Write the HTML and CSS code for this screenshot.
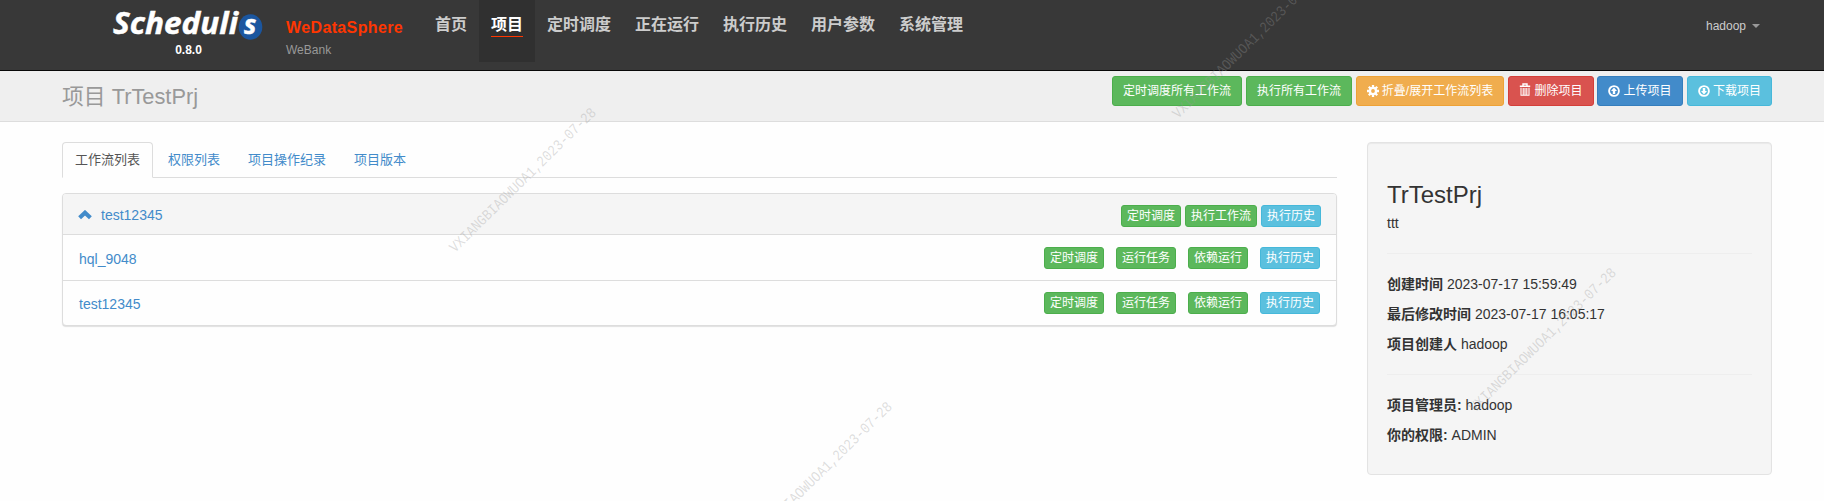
FILE: index.html
```html
<!DOCTYPE html>
<html lang="zh-CN">
<head>
<meta charset="utf-8">
<title>Schedulis</title>
<link rel="stylesheet" href="styles.css">
</head>
<body>
<header class="navbar">
  <div class="logo">
    <svg class="logo-mark" width="152" height="44" viewBox="0 0 152 44">
      <text class="logo-text" x="1" y="34" textLength="125" lengthAdjust="spacingAndGlyphs">Scheduli</text>
      <ellipse cx="138.5" cy="27" rx="11.8" ry="12.8" fill="#1b569f"/>
      <text class="logo-s" x="132" y="34">s</text>
    </svg>
    <div class="version">0.8.0</div>
  </div>
  <div class="brand"><div class="brand-name">WeDataSphere</div><div class="brand-sub">WeBank</div></div>
  <nav class="menu">
    <a>首页</a><a class="active"><span>项目</span></a><a>定时调度</a><a>正在运行</a><a>执行历史</a><a>用户参数</a><a>系统管理</a>
  </nav>
  <div class="user">hadoop<i class="caret"></i></div>
</header>
<section class="titlebar">
  <h1>项目 TrTestPrj</h1>
  <div class="actions">
    <button class="btn green w130">定时调度所有工作流</button>
    <button class="btn green w106">执行所有工作流</button>
    <button class="btn orange w148"><svg class="icon" viewBox="0 0 12 12"><circle cx="6" cy="6" r="3.1" fill="none" stroke="#fff" stroke-width="2.4"/><path d="M6 0v2.5M6 9.5V12M0 6h2.5M9.5 6H12M1.8 1.8l1.7 1.7M8.5 8.5l1.7 1.7M10.2 1.8L8.500 3.500M3.500 8.500L1.800 10.200" stroke="#fff" stroke-width="2.3"/></svg>折叠/展开工作流列表</button>
    <button class="btn red w86"><svg class="icon trash" viewBox="0 0 12 14"><path d="M4 2.500V1h4v1.500M.8 3.200h10.400" fill="none" stroke="#fff" stroke-width="1.400"/><path d="M2 4.800V12.300h8V4.800M4.200 5v7M6 5v7M7.800 5v7" fill="none" stroke="#fff" stroke-width="1.1"/></svg>删除项目</button>
    <button class="btn blue w86 tight"><svg class="icon" viewBox="0 0 12 12"><circle cx="6" cy="6" r="4.900" fill="none" stroke="#fff" stroke-width="1.900"/><path d="M6 2.600l3 3.300H7.200V9H4.800V5.900H3z" fill="#fff"/></svg>上传项目</button>
    <button class="btn cyan w85"><svg class="icon" viewBox="0 0 12 12"><circle cx="6" cy="6" r="4.900" fill="none" stroke="#fff" stroke-width="1.900"/><path d="M6 9.400l3-3.300H7.200V3H4.800v3.100H3z" fill="#fff"/></svg>下载项目</button>
  </div>
</section>
<main class="content">
  <div class="main">
    <div class="tabs"><a class="tab current">工作流列表</a><a class="tab">权限列表</a><a class="tab">项目操作纪录</a><a class="tab">项目版本</a></div>
    <div class="panel">
      <div class="panel-head">
        <a class="flow"><svg class="chevron" width="14" height="10" viewBox="0 0 14 10"><path d="M1.600 7.800L7 2.700l5.400 5.100" fill="none" stroke="#428bca" stroke-width="4.100"/></svg>test12345</a>
        <div class="head-buttons"><button class="btn xs green">定时调度</button><button class="btn xs green wide">执行工作流</button><button class="btn xs cyan">执行历史</button></div>
      </div>
      <div class="row first"><a>hql_9048</a>
        <div class="row-buttons"><button class="btn xs green">定时调度</button><button class="btn xs green">运行任务</button><button class="btn xs green">依赖运行</button><button class="btn xs cyan">执行历史</button></div>
      </div>
      <div class="row"><a>test12345</a>
        <div class="row-buttons"><button class="btn xs green">定时调度</button><button class="btn xs green">运行任务</button><button class="btn xs green">依赖运行</button><button class="btn xs cyan">执行历史</button></div>
      </div>
    </div>
  </div>
  <aside class="well">
    <h2>TrTestPrj</h2>
    <p class="desc">ttt</p>
    <hr>
    <p><b>创建时间</b> 2023-07-17 15:59:49</p>
    <p><b>最后修改时间</b> 2023-07-17 16:05:17</p>
    <p><b>项目创建人</b> hadoop</p>
    <hr>
    <p><b>项目管理员:</b> hadoop</p>
    <p><b>你的权限:</b> ADMIN</p>
  </aside>
</main>
<svg class="watermark" id="watermark" width="1824" height="501"></svg>
<script src="watermark.js"></script>
</body>
</html>
```
FILE: styles.css
```css
* { box-sizing: border-box; }
body { margin: 0; height: 501px; overflow: hidden; position: relative; background: #fefefe; color: #333; font: 14px/20px "Liberation Sans", "Noto Sans CJK SC", sans-serif; }
a { color: #428bca; text-decoration: none; }
h1, h2, p { margin: 0; font-weight: normal; }
.navbar { display: flex; height: 71px; padding-left: 112px; background: #383838; border-bottom: 1px solid #080808; }
.logo { width: 174px; }
.logo-mark { display: block; }
.logo-text, .logo-s { fill: #fff; stroke: #fff; stroke-width: .5; font-family: "Open Sans", sans-serif; font-weight: 700; font-style: italic; }
.logo-text { font-size: 31px; }
.logo-s { font-size: 26px; }
.version { width: 152px; margin-top: -4px; text-align: center; color: #fff; font-size: 12px; font-weight: bold; text-indent: 1px; }
.brand { width: 137px; padding-top: 18px; }
.brand-name { color: #ff3601; font-size: 16px; font-weight: bold; line-height: 20px; letter-spacing: .37px; }
.brand-sub { margin-top: 2px; color: #999; font-size: 12px; }
.menu { display: flex; height: 62px; }
.menu a { padding: 15px 12px; color: #ccc; font-size: 16px; font-weight: bold; }
.menu .active { background: #303030; color: #fff; }
.active span { display: block; height: 22px; border-bottom: 1px solid #ff3601; }
.user { display: flex; align-items: center; height: 20px; margin: 16px 64px 0 auto; color: #ccc; font-size: 12px; }
.caret { margin-left: 6px; border: 4px solid transparent; border-top-color: #999; border-bottom: 0; }
.titlebar { display: flex; justify-content: space-between; height: 51px; padding: 5px 52px 0 62px; background: #efefef; border-bottom: 1px solid #ddd; }
h1 { padding-top: 5px; color: #999; font-size: 21.8px; line-height: 32px; }
.actions { display: flex; gap: 4px; }
.btn { display: flex; align-items: center; justify-content: center; flex: none; height: 30px; padding: 0; border: 1px solid; border-radius: 3px; color: #fff; font: 12px/18px "Liberation Sans", "Noto Sans CJK SC", sans-serif; white-space: nowrap; }
.green { background: #5cb85c; border-color: #4cae4c; }
.orange { background: #f0ad4e; border-color: #eea236; }
.red { background: #d9534f; border-color: #d43f3a; }
.blue { background: #428bca; border-color: #357ebd; }
.cyan { background: #5bc0de; border-color: #46b8da; }
.w130 { width: 130px; }
.w106 { width: 106px; }
.w148 { width: 148px; }
.w86 { width: 86px; }
.w85 { width: 85px; }
.tight { margin-left: -1px; }
.icon { width: 12px; height: 12px; margin: -1px 3px 0 0; }
.trash { height: 14px; margin-top: -3px; }
.content { display: flex; gap: 30px; padding: 20px 52px 0 62px; }
.main { width: 1275px; }
.tabs { display: flex; height: 36px; border-bottom: 1px solid #ddd; }
.tab { height: 36px; padding: 7px 12px; margin-right: 2px; border: 1px solid transparent; font-size: 13px; }
.tab.current { width: 91px; color: #555; background: #fefefe; border-color: #ddd #ddd #fefefe; border-radius: 4px 4px 0 0; }
.panel { margin-top: 15px; height: 133px; border: 1px solid #ddd; border-radius: 4px; background: #fefefe; box-shadow: 0 1px 1px rgba(0,0,0,.12); }
.panel-head { display: flex; justify-content: space-between; height: 41px; padding: 11px 15px 0; border-bottom: 1px solid #ddd; border-radius: 3px 3px 0 0; background: #f5f5f5; }
.flow { display: flex; height: 19px; align-items: center; }
.chevron { margin-right: 9px; }
.head-buttons { display: flex; gap: 4px; }
.row { display: flex; justify-content: space-between; height: 45px; padding: 11px 16px 0; line-height: 24px; border-bottom: 1px solid #ddd; }
.row.first { height: 46px; padding-top: 12px; }
.row-buttons { display: flex; gap: 12px; }
.btn.xs { width: 60px; height: 22px; }
.btn.wide { width: 72px; }
.well { width: 405px; height: 333px; padding: 39px 19px 0; border: 1px solid #e3e3e3; border-radius: 4px; background: #f5f5f5; box-shadow: inset 0 1px 1px rgba(0,0,0,.05); }
h2 { font-size: 24px; line-height: 26px; }
.well p { height: 20px; margin-bottom: 10px; }
.well .desc { margin-top: 5px; margin-bottom: 0; }
.well hr { height: 1px; margin: 20px 0; border: 0; background: #eee; }
.watermark { position: absolute; left: 0; top: 0; pointer-events: none; }
.watermark text { font-family: "Liberation Mono", monospace; }
.mark { fill: #999; fill-opacity: .32; font-size: 15px; }
.mark-faint { fill: #888; fill-opacity: .022; font-size: 20px; }
```
FILE: watermark.js
```js
const layer = document.getElementById('watermark');
const label = 'VXIANGBIAOWUOA1,2023-07-28';

function stamp(x, y, className, length) {
  const node = document.createElementNS('http://www.w3.org/2000/svg', 'text');
  node.setAttribute('class', className);
  node.setAttribute('transform', `translate(${x} ${y}) rotate(-44.5)`);
  node.setAttribute('textLength', length);
  node.setAttribute('lengthAdjust', 'spacingAndGlyphs');
  node.textContent = label;
  layer.appendChild(node);
}

[[455, 253], [1178, 119], [1475, 413], [751, 547]].forEach(([x, y]) => stamp(x, y, 'mark', 199));

for (let n = -2; n < 8; n++) {
  for (let k = -12; k < 22; k++) {
    const x = 267 + 100 * k + 250 * n;
    const y = 274 + 100 * k - 250 * n;
    if (x > -190 && x < 1824 && y > 0 && y < 690) stamp(x, y, 'mark-faint', 268);
  }
}
```
